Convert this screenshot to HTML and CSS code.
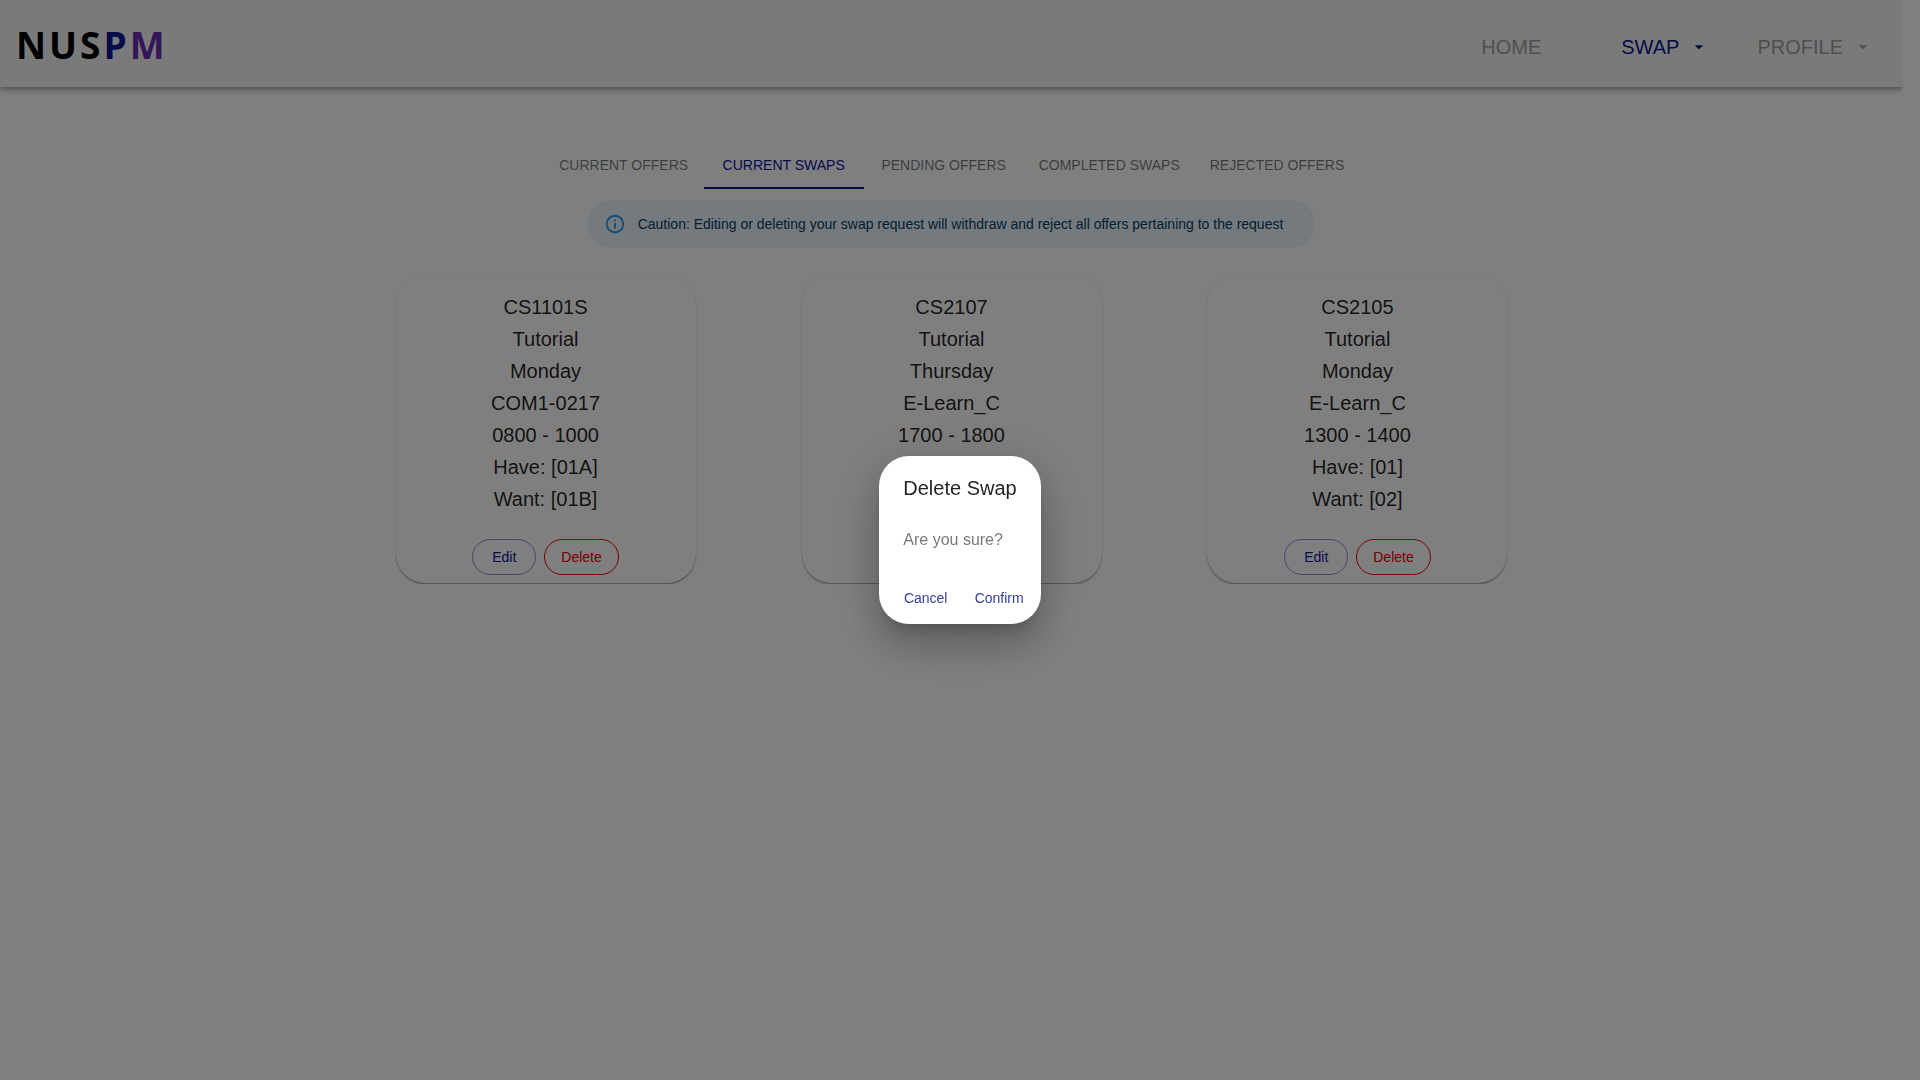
FILE: index.html
```html
<!DOCTYPE html>
<html lang="en">
<head>
<meta charset="utf-8">
<title>NUSPM</title>
<link rel="stylesheet" href="styles.css">
</head>
<body>
<header class="app-bar">
  <a class="logo" href="#">NUS<span class="logo-p">P</span><span class="logo-m">M</span></a>
  <nav class="nav">
    <a class="nav-item nav-home" href="#">HOME</a>
    <button class="nav-item nav-active" type="button">SWAP
      <svg class="caret" viewBox="0 0 24 24" aria-hidden="true"><path d="M7 10l5 5 5-5z"/></svg>
    </button>
    <button class="nav-item" type="button">PROFILE
      <svg class="caret" viewBox="0 0 24 24" aria-hidden="true"><path d="M7 10l5 5 5-5z"/></svg>
    </button>
  </nav>
</header>
<main class="content">
  <div class="tabs" role="tablist">
    <button class="tab" type="button" role="tab">CURRENT OFFERS</button>
    <button class="tab tab-active" type="button" role="tab" aria-selected="true">CURRENT SWAPS</button>
    <button class="tab" type="button" role="tab">PENDING OFFERS</button>
    <button class="tab" type="button" role="tab">COMPLETED SWAPS</button>
    <button class="tab" type="button" role="tab">REJECTED OFFERS</button>
  </div>
  <div class="alert" role="note">
    <svg class="alert-icon" viewBox="0 0 24 24" aria-hidden="true"><path d="M11,9H13V7H11M12,20C7.59,20 4,16.41 4,12C4,7.59 7.59,4 12,4C16.41,4 20,7.59 20,12C20,16.41 16.41,20 12,20M12,2A10,10 0 0,0 2,12A10,10 0 0,0 12,22A10,10 0 0,0 22,12A10,10 0 0,0 12,2M11,17H13V11H11V17Z"/></svg>
    <span>Caution: Editing or deleting your swap request will withdraw and reject all offers pertaining to the request</span>
  </div>
  <div class="cards">
    <article class="card">
      <div class="card-text">
        <p>CS1101S</p><p>Tutorial</p><p>Monday</p><p>COM1-0217</p><p>0800 - 1000</p><p>Have: [01A]</p><p>Want: [01B]</p>
      </div>
      <div class="card-actions">
        <button class="btn btn-edit" type="button">Edit</button>
        <button class="btn btn-delete" type="button">Delete</button>
      </div>
    </article>
    <article class="card">
      <div class="card-text">
        <p>CS2107</p><p>Tutorial</p><p>Thursday</p><p>E-Learn_C</p><p>1700 - 1800</p>
      </div>
    </article>
    <article class="card">
      <div class="card-text">
        <p>CS2105</p><p>Tutorial</p><p>Monday</p><p>E-Learn_C</p><p>1300 - 1400</p><p>Have: [01]</p><p>Want: [02]</p>
      </div>
      <div class="card-actions">
        <button class="btn btn-edit" type="button">Edit</button>
        <button class="btn btn-delete" type="button">Delete</button>
      </div>
    </article>
  </div>
</main>
<div class="backdrop">
  <div class="dialog" role="dialog" aria-modal="true" aria-labelledby="dialog-title">
    <h2 class="dialog-title" id="dialog-title">Delete Swap</h2>
    <p class="dialog-text">Are you sure?</p>
    <div class="dialog-actions">
      <button class="text-btn" type="button">Cancel</button>
      <button class="text-btn" type="button">Confirm</button>
    </div>
  </div>
</div>
</body>
</html>
```
FILE: styles.css
```css
* { box-sizing: border-box; }

body {
  margin: 0;
  padding-right: 17px;
  background: #fff;
  color: rgba(0, 0, 0, 0.87);
  font-family: "Liberation Sans", Arial, sans-serif;
  font-size: 14px;
}

button {
  border: 0;
  background: none;
  font: inherit;
  color: inherit;
  cursor: pointer;
}

p, h2 { margin: 0; }

.app-bar {
  display: flex;
  align-items: center;
  justify-content: space-between;
  height: 87px;
  padding: 0 30px 0 16px;
  background: #f5f5f5;
  box-shadow: 0 2px 4px -1px rgba(0, 0, 0, 0.2), 0 4px 5px 0 rgba(0, 0, 0, 0.14), 0 1px 10px 0 rgba(0, 0, 0, 0.12);
  clip-path: inset(0 0 -16px 0);
}

.logo {
  padding-top: 2px;
  font-family: "Open Sans", "Noto Sans", sans-serif;
  font-size: 37px;
  font-weight: 700;
  line-height: 48px;
  letter-spacing: 3px;
  color: #000;
  text-decoration: none;
}
.logo-p { color: #0a1496; }
.logo-m { color: #6a2cb0; }

.nav {
  display: flex;
  align-items: center;
  gap: 48px;
  padding-top: 6px;
}
.nav-item {
  display: flex;
  align-items: center;
  gap: 10px;
  padding: 0;
  font-size: 20px;
  line-height: 32px;
  color: #9e9e9e;
  text-decoration: none;
}
.nav-home { margin-right: 32px; }
.nav-active { color: #0a1496; }
.caret { width: 20px; height: 20px; fill: currentColor; }

.content {
  display: flex;
  flex-direction: column;
  align-items: center;
  padding-top: 54px;
}

.tabs { display: flex; }
.tab {
  min-width: 160px;
  height: 48px;
  padding: 2px 15px 0;
  border-bottom: 2px solid transparent;
  color: rgba(0, 0, 0, 0.54);
}
.tab-active { color: #0a1496; border-color: currentColor; }

.alert {
  display: flex;
  align-items: center;
  gap: 12px;
  margin-top: 11px;
  padding: 13px 32px 13px 16px;
  border-radius: 24px;
  background: #e8f4fd;
  color: #0d3c61;
  line-height: 20px;
}
.alert-icon { width: 22px; height: 22px; fill: #2196f3; }

.cards {
  display: grid;
  grid-template-columns: repeat(3, 1fr);
  justify-items: center;
  width: 64%;
  margin-top: 26px;
}
.card {
  width: 300px;
  border-radius: 30px;
  border-bottom: 1px solid #acacac;
  background: #fff;
  box-shadow: 0 1px 1px 0 rgba(0, 0, 0, 0.14), 0 1px 3px 0 rgba(0, 0, 0, 0.12);
}
.card-text {
  padding: 17px 16px 16px;
  font-size: 20px;
  line-height: 32px;
  text-align: center;
}
.card-actions {
  display: flex;
  justify-content: center;
  gap: 8px;
  padding: 8px;
}
.btn {
  min-width: 64px;
  height: 36px;
  padding: 0 16px;
  border: 1px solid;
  border-radius: 18px;
}
.btn-edit { color: #0a1496; border-color: #8c8cd8; }
.btn-delete { color: #f00000; border-color: #f00000; }

.backdrop {
  position: fixed;
  inset: 0;
  display: flex;
  align-items: center;
  justify-content: center;
  background: rgba(0, 0, 0, 0.5);
}
.dialog {
  border-radius: 30px;
  background: #fff;
  box-shadow: 0 11px 15px -7px rgba(0, 0, 0, 0.2), 0 24px 38px 3px rgba(0, 0, 0, 0.14), 0 9px 46px 8px rgba(0, 0, 0, 0.12);
}
.dialog-title {
  padding: 16px 24px;
  font-size: 20px;
  font-weight: 400;
  line-height: 32px;
}
.dialog-text {
  padding: 8px 24px 20px;
  font-size: 16px;
  line-height: 24px;
  color: rgba(0, 0, 0, 0.54);
}
.dialog-actions {
  display: flex;
  justify-content: flex-end;
  gap: 8px;
  padding: 8px;
}
.text-btn {
  min-width: 64px;
  height: 36px;
  padding: 0 9px;
  border-radius: 4px;
  color: #303f9f;
}
```
